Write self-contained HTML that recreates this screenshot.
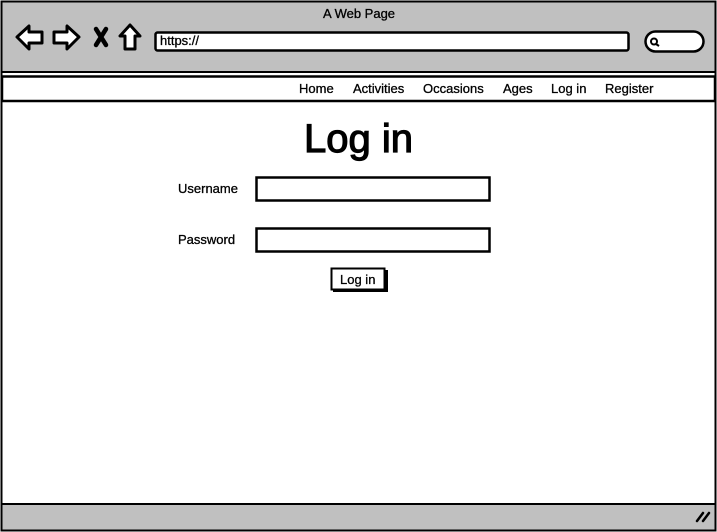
<!DOCTYPE html>
<html><head><style>
body{margin:0;width:717px;height:532px;overflow:hidden;background:#fff;font-family:"Liberation Sans",sans-serif;position:relative}
.a{position:absolute}
.t{position:absolute;font-size:13px;color:#000;white-space:nowrap;-webkit-text-stroke:0.3px #000}
</style></head><body>
<svg class="a" style="left:0;top:0" width="717" height="532">
<rect x="1.5" y="1.5" width="714" height="71" fill="#c0c0c0" stroke="#000" stroke-width="2"/>
<rect x="1.5" y="504" width="714" height="26.5" fill="#c0c0c0" stroke="#000" stroke-width="2"/>
<rect x="1.5" y="72" width="714" height="432" fill="#fff" stroke="#000" stroke-width="2"/>
<rect x="2" y="76.5" width="713" height="24.5" fill="#fff" stroke="#000" stroke-width="2.5"/>
<path d="M17 37 L29 26 L29 32 L42 32 L42 43 L29 43 L29 49 Z" fill="#fff" stroke="#000" stroke-width="3" stroke-linejoin="round"/>
<path d="M79 37 L67 26 L67 32 L54 32 L54 43 L67 43 L67 49 Z" fill="#fff" stroke="#000" stroke-width="3" stroke-linejoin="round"/>
<path d="M96 29 L106 45 M106 29 L96 45" stroke="#000" stroke-width="4.5" stroke-linecap="round"/>
<path d="M130 25 L120 36 L125 36 L125 49 L135 49 L135 36 L140 36 Z" fill="#fff" stroke="#000" stroke-width="3" stroke-linejoin="round"/>
<rect x="155.5" y="32.5" width="473" height="18" rx="2" fill="#fff" stroke="#000" stroke-width="2.5"/>
<rect x="645.5" y="31.5" width="58" height="20" rx="10" fill="#fff" stroke="#000" stroke-width="2.5"/>
<circle cx="654" cy="41.5" r="3" fill="none" stroke="#000" stroke-width="2"/>
<path d="M656 44 L659 46" stroke="#000" stroke-width="2"/>
<path d="M697 521 L703 513 M703 521 L709 513" stroke="#000" stroke-width="2.5" stroke-linecap="round"/>
<rect x="256.5" y="177.5" width="233" height="23" fill="#fff" stroke="#000" stroke-width="2.5"/>
<rect x="256.5" y="228.5" width="233" height="23" fill="#fff" stroke="#000" stroke-width="2.5"/>
<rect x="333" y="270" width="55" height="22" fill="#000"/>
<rect x="331.5" y="268.5" width="53" height="21" fill="#fff" stroke="#000" stroke-width="2"/>
</svg>
<div class="t" style="left:323px;top:6px">A Web Page</div>
<div class="t" style="left:160px;top:33px">https://</div>
<div class="t" style="left:299px;top:81px">Home</div>
<div class="t" style="left:353px;top:81px">Activities</div>
<div class="t" style="left:423px;top:81px">Occasions</div>
<div class="t" style="left:503px;top:81px">Ages</div>
<div class="t" style="left:551px;top:81px">Log in</div>
<div class="t" style="left:605px;top:81px">Register</div>
<div class="t" style="left:304px;top:117px;font-size:40px;-webkit-text-stroke:1.2px #000">Log in</div>
<div class="t" style="left:178px;top:181px">Username</div>
<div class="t" style="left:178px;top:232px">Password</div>
<div class="t" style="left:340px;top:272px">Log in</div>
</body></html>
